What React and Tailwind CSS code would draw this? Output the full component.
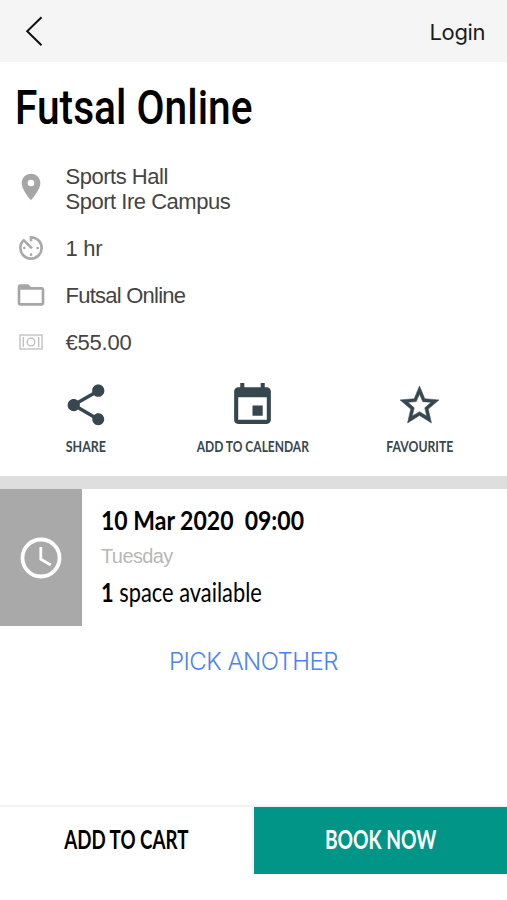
const sans = 'font-["Liberation_Sans",Arial,sans-serif]';

function InfoRow({ icon, children, className }) {
  return (
    <div className={`flex items-center ${className}`}>
      <div className="flex w-[61px] shrink-0 justify-center">{icon}</div>
      <div className="ml-[4.5px] text-[22px] leading-[25px] whitespace-nowrap text-[#444]">{children}</div>
    </div>
  );
}

function Action({ label, labelClass, children }) {
  return (
    <button className="flex w-[167px] flex-col items-center text-[#37474f]">
      {children}
      <span className={`mt-[7px] inline-block font-[Lato,sans-serif] text-[16px] leading-5 font-bold whitespace-nowrap ${labelClass}`}>
        {label}
      </span>
    </button>
  );
}

export default function App() {
  return (
    <div className={`flex h-[900px] w-[507px] flex-col overflow-hidden bg-white text-black ${sans}`}>
      <header className="flex h-[62px] shrink-0 items-center justify-between bg-[#f5f5f5] pr-[22px] pl-[25px]">
        <svg width="18" height="30" viewBox="0 0 18 30" fill="none" stroke="#111" strokeWidth="2">
          <path d="M16.5 1.3 2.2 15.3 16.5 29.3" />
        </svg>
        <span className="mt-px font-[Inter,sans-serif] text-[22px] leading-7 tracking-[-0.4px] text-[#1c1c1c]">Login</span>
      </header>

      <h1 className="mt-[16px] ml-[15px] h-[60px] origin-left scale-x-[0.848] self-start font-[Roboto,sans-serif] text-[48px] leading-[60px] font-medium whitespace-nowrap">
        Futsal Online
      </h1>

      <section className="flex flex-col">
        <InfoRow
          className="mt-[26px] h-[50px] tracking-[-0.48px]"
          icon={
            <svg width="32" height="32" viewBox="0 0 24 24" fill="#a6a6a6" className="-mt-1">
              <path d="M12 2C8.13 2 5 5.13 5 9c0 5.25 7 13 7 13s7-7.75 7-13c0-3.87-3.13-7-7-7zm0 9.5a2.5 2.5 0 0 1 0-5 2.5 2.5 0 0 1 0 5z" />
            </svg>
          }
        >
          Sports Hall
          <br />
          Sport Ire Campus
        </InfoRow>
        <InfoRow
          className="mt-[22px] h-[25px] tracking-[-0.3px]"
          icon={
            <svg width="32" height="32" viewBox="0 0 24 24" fill="#a9a9a9" className="-mt-[2px]">
              <path d="M11 17a1 1 0 0 0 2 0 1 1 0 0 0-2 0zm0-14v4h2V5.08c3.39.49 6 3.39 6 6.92a7 7 0 0 1-14 0c0-1.68.59-3.22 1.58-4.42L12 13l1.41-1.41-6.8-6.8v.02A8.98 8.98 0 0 0 3 12a9 9 0 1 0 9-9h-1zm7 9a1 1 0 0 0-2 0 1 1 0 0 0 2 0zM6 12a1 1 0 0 0 2 0 1 1 0 0 0-2 0z" />
            </svg>
          }
        >
          1 hr
        </InfoRow>
        <InfoRow
          className="mt-[22px] h-[25px] tracking-[-0.76px]"
          icon={
            <svg width="32" height="32" viewBox="0 0 24 24" fill="#a6a6a6" className="-mt-px">
              <path d="M20 6h-8l-2-2H4c-1.1 0-1.99.9-1.99 2L2 18c0 1.1.9 2 2 2h16c1.1 0 2-.9 2-2V8c0-1.1-.9-2-2-2zm0 12H4V8h16v10z" />
            </svg>
          }
        >
          Futsal Online
        </InfoRow>
        <InfoRow
          className="mt-[22px] h-[25px] tracking-[-0.2px]"
          icon={
            <svg width="24" height="16" viewBox="0 0 24 16" fill="none" stroke="#bdbdbd" strokeWidth="1.3" className="-mt-px">
              <rect x="1" y="1" width="22" height="14" />
              <path d="M4.3 3v10M19.7 3v10" />
              <circle cx="12" cy="8" r="3.8" />
            </svg>
          }
        >
          €55.00
        </InfoRow>
      </section>

      <section className="mt-[25px] mr-[2px] flex h-[96px] shrink-0 justify-center">
        <Action label="SHARE" labelClass="scale-x-[0.78]">
          <svg width="49" height="49" viewBox="0 0 24 24" fill="currentColor" className="translate-x-[0.5px] translate-y-[0.5px]">
            <path d="M18 16.08c-.76 0-1.44.3-1.96.77L8.91 12.7c.05-.23.09-.46.09-.7s-.04-.47-.09-.7l7.05-4.11c.54.5 1.25.81 2.04.81 1.66 0 3-1.34 3-3s-1.34-3-3-3-3 1.34-3 3c0 .24.04.47.09.7L8.04 9.81C7.5 9.31 6.79 9 6 9c-1.66 0-3 1.34-3 3s1.34 3 3 3c.79 0 1.5-.31 2.04-.81l7.12 4.16c-.05.21-.08.43-.08.65 0 1.61 1.31 2.92 2.92 2.92s2.92-1.31 2.92-2.92-1.31-2.92-2.92-2.92z" />
          </svg>
        </Action>
        <Action label="ADD TO CALENDAR" labelClass="scale-x-[0.75]">
          <svg width="49" height="49" viewBox="0 0 24 24" fill="currentColor" className="translate-y-px">
            <path d="M17 12h-5v5h5v-5zM16 1v2H8V1H6v2H5c-1.11 0-1.99.9-1.99 2L3 19a2 2 0 0 0 2 2h14c1.1 0 2-.9 2-2V5c0-1.1-.9-2-2-2h-1V1h-2zm3 18H5V8h14v11z" />
          </svg>
        </Action>
        <Action label="FAVOURITE" labelClass="scale-x-[0.765]">
          <svg width="49" height="49" viewBox="0 0 24 24" fill="currentColor" stroke="currentColor" strokeWidth="0.25">
            <path d="m21.5 9.75-6.9-.58L12 2.9 9.4 9.18l-6.9.57 5.2 4.51-1.55 6.75L12 17.44l5.85 3.57-1.55-6.75 5.2-4.51zM12 15.49l-3.5 2.11.93-3.98-3.09-2.68 4.08-.35L12 6.84l1.59 3.76 4.08.35-3.09 2.68.93 3.98L12 15.49z" />
          </svg>
        </Action>
      </section>

      <div className="h-[13px] shrink-0 bg-[#dedede]" />

      <section className="flex h-[137px] shrink-0">
        <div className="flex w-[82px] items-center justify-center bg-[#a9a9a9]">
          <svg width="42" height="42" viewBox="0 0 42 42" fill="none" stroke="#fff">
            <circle cx="21" cy="21" r="18.5" strokeWidth="3.8" />
            <path d="M20.8 10v12.3l10 5.7" strokeWidth="2.8" />
          </svg>
        </div>
        <div className="flex flex-col items-start pt-[15px] pl-[19px]">
          <div className="origin-left scale-x-[0.885] font-[Lato,sans-serif] text-[26px] leading-8 font-bold whitespace-pre">
            10 Mar 2020  09:00
          </div>
          <div className="mt-[8px] text-[20px] leading-6 tracking-[-0.6px] text-[#b8b8b8]">Tuesday</div>
          <div className="mt-[8px] origin-left scale-x-[0.84] font-[Lato,sans-serif] text-[26px] leading-8 whitespace-nowrap">
            <b>1</b> space available
          </div>
        </div>
      </section>

      <button className="mt-[20px] self-center font-[Inter,sans-serif] text-[24px] leading-8 font-[350] tracking-[-0.55px] whitespace-nowrap text-[#4c84ee]">
        PICK ANOTHER
      </button>

      <footer className="mt-auto mb-[26px] flex h-[69px] shrink-0 border-t-2 border-[#f2f2f2] font-[Lato,sans-serif] text-[26px] font-bold">
        <button className="flex w-[254px] items-center justify-center border-r-2 border-[#f5f5f5] pb-[2px] pl-px">
          <span className="inline-block scale-x-[0.72] whitespace-nowrap">ADD TO CART</span>
        </button>
        <button className="flex flex-1 items-center justify-center bg-[#009587] pb-[2px] text-white">
          <span className="inline-block scale-x-[0.737] whitespace-nowrap">BOOK NOW</span>
        </button>
      </footer>
    </div>
  );
}
